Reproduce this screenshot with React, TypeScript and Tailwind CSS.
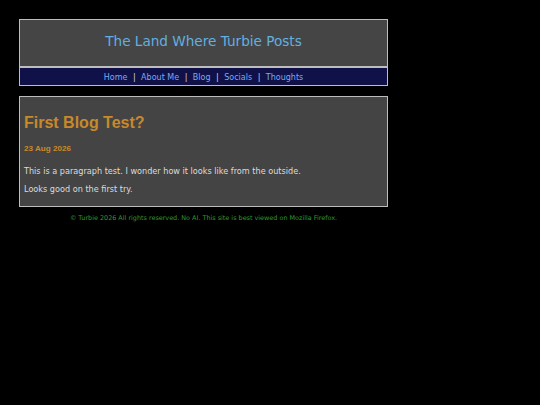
import React from "react";

const links = ["Home", "About Me", "Blog", "Socials", "Thoughts"];

export default function App() {
  return (
    <div className="min-h-[405px] w-full bg-black pt-[19px] pl-[19px]" style={{ fontFamily: '"DejaVu Sans", Verdana, sans-serif' }}>
      <div className="w-[369px]">
        <header className="border border-[#bdbdbd] bg-[#454545] pt-[13px] pb-[17px] text-center">
          <h1 className="text-[13.6px] leading-[16px] font-normal text-[#62b0e0]">The Land Where Turbie Posts</h1>
        </header>
        <nav className="border border-[#bdbdbd] bg-[#11114a] pt-[5px] pb-[2px] text-center text-[8px] leading-[10px]">
          {links.map((l, i) => (
            <React.Fragment key={l}>
              {i > 0 && <span className="mx-[5.5px] text-[#d8d8d8]">|</span>}
              <a className="text-[#78aaf0]">{l}</a>
            </React.Fragment>
          ))}
        </nav>
        <main className="mt-[10px] border border-[#bdbdbd] bg-[#444444] px-[4px] pt-[17px] pb-[12px]">
          <h2 className="text-[16px] leading-[18px] font-bold text-[#c8892b]" style={{ fontFamily: '"Liberation Sans", Arial, sans-serif' }}>
            First Blog Test?
          </h2>
          <div className="mt-[12px] text-[8.1px] leading-[10px] font-bold text-[#c8892b]" style={{ fontFamily: '"Liberation Sans", Arial, sans-serif' }}>
            23 Aug 2026
          </div>
          <p className="mt-[12px] text-[8.15px] leading-[10px] text-[#dcdcdc]">This is a paragraph test. I wonder how it looks like from the outside.</p>
          <p className="mt-[8px] text-[8.15px] leading-[10px] text-[#dcdcdc]">Looks good on the first try.</p>
        </main>
        <footer className="mt-[7px] text-center text-[6.45px] leading-[8px] text-[#2e9a2e]">
          © Turbie 2026 All rights reserved. No AI. This site is best viewed on Mozilla Firefox.
        </footer>
      </div>
    </div>
  );
}
